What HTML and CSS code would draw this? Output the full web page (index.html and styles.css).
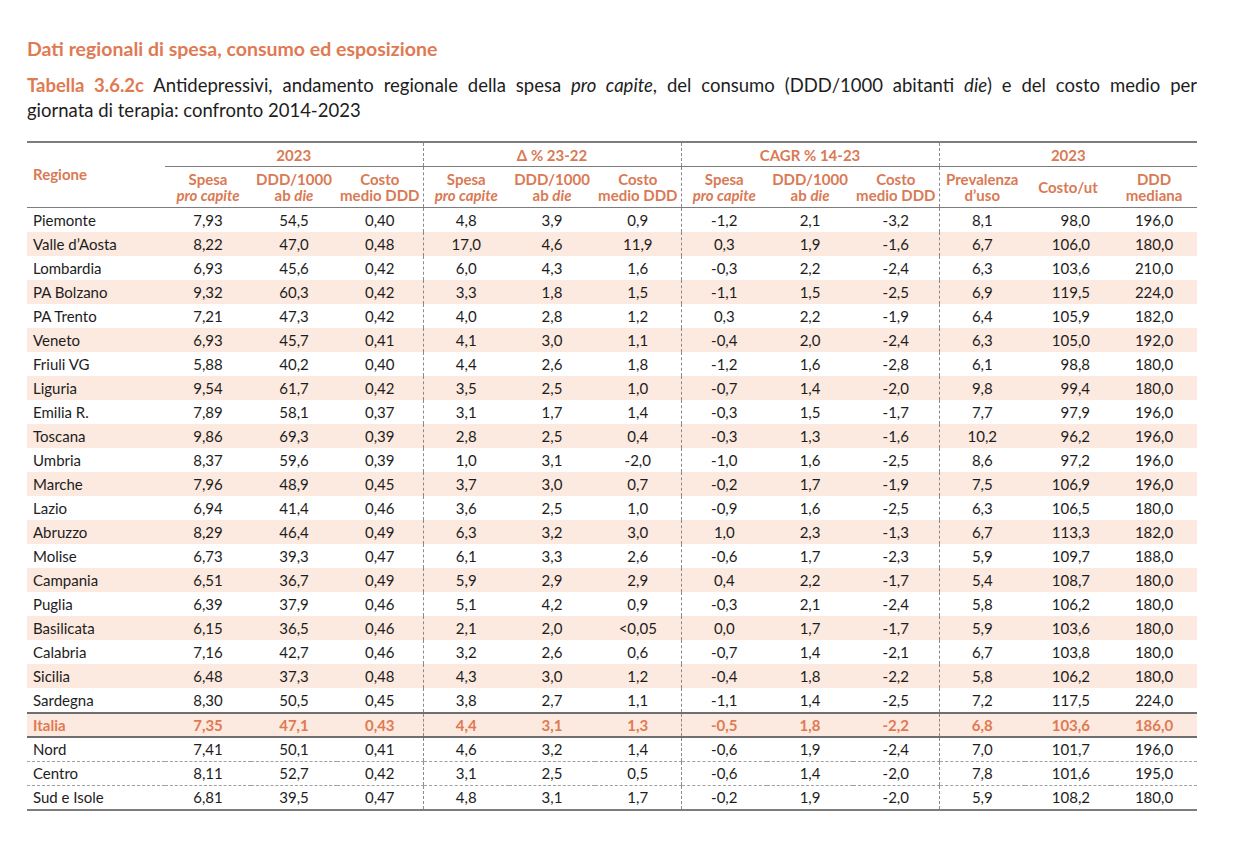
FILE: index.html
```html
<!DOCTYPE html>
<html lang="it">
<head>
<meta charset="utf-8">
<title>Tabella 3.6.2c</title>
<link rel="stylesheet" href="styles.css">
</head>
<body>
<div class="page">
  <h2 class="section-title">Dati regionali di spesa, consumo ed esposizione</h2>
  <p class="caption"><span class="cap-line first"><span class="tab-label">Tabella 3.6.2c</span> Antidepressivi, andamento regionale della spesa <i>pro capite</i>, del consumo (DDD/1000 abitanti <i>die</i>) e del costo medio per</span><span class="cap-line">giornata di terapia: confronto 2014-2023</span></p>
  <table class="data">
    <colgroup>
      <col class="c-reg">
      <col class="c-num"><col class="c-num"><col class="c-num">
      <col class="c-num"><col class="c-num"><col class="c-num">
      <col class="c-num"><col class="c-num"><col class="c-num">
      <col class="c-num"><col class="c-num"><col class="c-num">
    </colgroup>
    <thead>
      <tr class="h1">
        <th class="reg" rowspan="2">Regione</th>
        <th colspan="3" class="grp">2023</th>
        <th colspan="3" class="grp sep">Δ % 23-22</th>
        <th colspan="3" class="grp sep">CAGR % 14-23</th>
        <th colspan="3" class="grp sep">2023</th>
      </tr>
      <tr class="h2">
        <th>Spesa<br><i>pro capite</i></th>
        <th>DDD/1000<br>ab <i>die</i></th>
        <th>Costo<br>medio DDD</th>
        <th class="sep">Spesa<br><i>pro capite</i></th>
        <th>DDD/1000<br>ab <i>die</i></th>
        <th>Costo<br>medio DDD</th>
        <th class="sep">Spesa<br><i>pro capite</i></th>
        <th>DDD/1000<br>ab <i>die</i></th>
        <th>Costo<br>medio DDD</th>
        <th class="sep">Prevalenza<br>d’uso</th>
        <th>Costo/ut</th>
        <th>DDD<br>mediana</th>
      </tr>
    </thead>
    <tbody>
      <tr><td>Piemonte</td><td>7,93</td><td>54,5</td><td>0,40</td><td class="sep">4,8</td><td>3,9</td><td>0,9</td><td class="sep">-1,2</td><td>2,1</td><td>-3,2</td><td class="sep">8,1</td><td class="r">98,0</td><td>196,0</td></tr>
      <tr class="alt"><td>Valle d’Aosta</td><td>8,22</td><td>47,0</td><td>0,48</td><td class="sep">17,0</td><td>4,6</td><td>11,9</td><td class="sep">0,3</td><td>1,9</td><td>-1,6</td><td class="sep">6,7</td><td class="r">106,0</td><td>180,0</td></tr>
      <tr><td>Lombardia</td><td>6,93</td><td>45,6</td><td>0,42</td><td class="sep">6,0</td><td>4,3</td><td>1,6</td><td class="sep">-0,3</td><td>2,2</td><td>-2,4</td><td class="sep">6,3</td><td class="r">103,6</td><td>210,0</td></tr>
      <tr class="alt"><td>PA Bolzano</td><td>9,32</td><td>60,3</td><td>0,42</td><td class="sep">3,3</td><td>1,8</td><td>1,5</td><td class="sep">-1,1</td><td>1,5</td><td>-2,5</td><td class="sep">6,9</td><td class="r">119,5</td><td>224,0</td></tr>
      <tr><td>PA Trento</td><td>7,21</td><td>47,3</td><td>0,42</td><td class="sep">4,0</td><td>2,8</td><td>1,2</td><td class="sep">0,3</td><td>2,2</td><td>-1,9</td><td class="sep">6,4</td><td class="r">105,9</td><td>182,0</td></tr>
      <tr class="alt"><td>Veneto</td><td>6,93</td><td>45,7</td><td>0,41</td><td class="sep">4,1</td><td>3,0</td><td>1,1</td><td class="sep">-0,4</td><td>2,0</td><td>-2,4</td><td class="sep">6,3</td><td class="r">105,0</td><td>192,0</td></tr>
      <tr><td>Friuli VG</td><td>5,88</td><td>40,2</td><td>0,40</td><td class="sep">4,4</td><td>2,6</td><td>1,8</td><td class="sep">-1,2</td><td>1,6</td><td>-2,8</td><td class="sep">6,1</td><td class="r">98,8</td><td>180,0</td></tr>
      <tr class="alt"><td>Liguria</td><td>9,54</td><td>61,7</td><td>0,42</td><td class="sep">3,5</td><td>2,5</td><td>1,0</td><td class="sep">-0,7</td><td>1,4</td><td>-2,0</td><td class="sep">9,8</td><td class="r">99,4</td><td>180,0</td></tr>
      <tr><td>Emilia R.</td><td>7,89</td><td>58,1</td><td>0,37</td><td class="sep">3,1</td><td>1,7</td><td>1,4</td><td class="sep">-0,3</td><td>1,5</td><td>-1,7</td><td class="sep">7,7</td><td class="r">97,9</td><td>196,0</td></tr>
      <tr class="alt"><td>Toscana</td><td>9,86</td><td>69,3</td><td>0,39</td><td class="sep">2,8</td><td>2,5</td><td>0,4</td><td class="sep">-0,3</td><td>1,3</td><td>-1,6</td><td class="sep">10,2</td><td class="r">96,2</td><td>196,0</td></tr>
      <tr><td>Umbria</td><td>8,37</td><td>59,6</td><td>0,39</td><td class="sep">1,0</td><td>3,1</td><td>-2,0</td><td class="sep">-1,0</td><td>1,6</td><td>-2,5</td><td class="sep">8,6</td><td class="r">97,2</td><td>196,0</td></tr>
      <tr class="alt"><td>Marche</td><td>7,96</td><td>48,9</td><td>0,45</td><td class="sep">3,7</td><td>3,0</td><td>0,7</td><td class="sep">-0,2</td><td>1,7</td><td>-1,9</td><td class="sep">7,5</td><td class="r">106,9</td><td>196,0</td></tr>
      <tr><td>Lazio</td><td>6,94</td><td>41,4</td><td>0,46</td><td class="sep">3,6</td><td>2,5</td><td>1,0</td><td class="sep">-0,9</td><td>1,6</td><td>-2,5</td><td class="sep">6,3</td><td class="r">106,5</td><td>180,0</td></tr>
      <tr class="alt"><td>Abruzzo</td><td>8,29</td><td>46,4</td><td>0,49</td><td class="sep">6,3</td><td>3,2</td><td>3,0</td><td class="sep">1,0</td><td>2,3</td><td>-1,3</td><td class="sep">6,7</td><td class="r">113,3</td><td>182,0</td></tr>
      <tr><td>Molise</td><td>6,73</td><td>39,3</td><td>0,47</td><td class="sep">6,1</td><td>3,3</td><td>2,6</td><td class="sep">-0,6</td><td>1,7</td><td>-2,3</td><td class="sep">5,9</td><td class="r">109,7</td><td>188,0</td></tr>
      <tr class="alt"><td>Campania</td><td>6,51</td><td>36,7</td><td>0,49</td><td class="sep">5,9</td><td>2,9</td><td>2,9</td><td class="sep">0,4</td><td>2,2</td><td>-1,7</td><td class="sep">5,4</td><td class="r">108,7</td><td>180,0</td></tr>
      <tr><td>Puglia</td><td>6,39</td><td>37,9</td><td>0,46</td><td class="sep">5,1</td><td>4,2</td><td>0,9</td><td class="sep">-0,3</td><td>2,1</td><td>-2,4</td><td class="sep">5,8</td><td class="r">106,2</td><td>180,0</td></tr>
      <tr class="alt"><td>Basilicata</td><td>6,15</td><td>36,5</td><td>0,46</td><td class="sep">2,1</td><td>2,0</td><td>&lt;0,05</td><td class="sep">0,0</td><td>1,7</td><td>-1,7</td><td class="sep">5,9</td><td class="r">103,6</td><td>180,0</td></tr>
      <tr><td>Calabria</td><td>7,16</td><td>42,7</td><td>0,46</td><td class="sep">3,2</td><td>2,6</td><td>0,6</td><td class="sep">-0,7</td><td>1,4</td><td>-2,1</td><td class="sep">6,7</td><td class="r">103,8</td><td>180,0</td></tr>
      <tr class="alt"><td>Sicilia</td><td>6,48</td><td>37,3</td><td>0,48</td><td class="sep">4,3</td><td>3,0</td><td>1,2</td><td class="sep">-0,4</td><td>1,8</td><td>-2,2</td><td class="sep">5,8</td><td class="r">106,2</td><td>180,0</td></tr>
      <tr><td>Sardegna</td><td>8,30</td><td>50,5</td><td>0,45</td><td class="sep">3,8</td><td>2,7</td><td>1,1</td><td class="sep">-1,1</td><td>1,4</td><td>-2,5</td><td class="sep">7,2</td><td class="r">117,5</td><td>224,0</td></tr>
      <tr class="italia"><td>Italia</td><td>7,35</td><td>47,1</td><td>0,43</td><td class="sep">4,4</td><td>3,1</td><td>1,3</td><td class="sep">-0,5</td><td>1,8</td><td>-2,2</td><td class="sep">6,8</td><td class="r">103,6</td><td>186,0</td></tr>
      <tr class="area"><td>Nord</td><td>7,41</td><td>50,1</td><td>0,41</td><td class="sep">4,6</td><td>3,2</td><td>1,4</td><td class="sep">-0,6</td><td>1,9</td><td>-2,4</td><td class="sep">7,0</td><td class="r">101,7</td><td>196,0</td></tr>
      <tr class="area"><td>Centro</td><td>8,11</td><td>52,7</td><td>0,42</td><td class="sep">3,1</td><td>2,5</td><td>0,5</td><td class="sep">-0,6</td><td>1,4</td><td>-2,0</td><td class="sep">7,8</td><td class="r">101,6</td><td>195,0</td></tr>
      <tr class="area last"><td>Sud e Isole</td><td>6,81</td><td>39,5</td><td>0,47</td><td class="sep">4,8</td><td>3,1</td><td>1,7</td><td class="sep">-0,2</td><td>1,9</td><td>-2,0</td><td class="sep">5,9</td><td class="r">108,2</td><td>180,0</td></tr>
    </tbody>
  </table>
</div>
</body>
</html>
```

FILE: styles.css
```css
html, body {
  margin: 0;
  padding: 0;
  background: #ffffff;
}
body {
  font-family: Lato, "Open Sans", "Liberation Sans", sans-serif;
  color: #1d1d1d;
}
.page {
  width: 1170px;
  padding: 37px 0 0 27px;
}
.section-title {
  margin: 0;
  font-size: 19.5px;
  font-weight: bold;
  color: #e07a52;
  line-height: 24px;
}
.caption {
  margin: 12px 0 0 0;
  font-size: 18.5px;
  line-height: 25px;
}
.cap-line {
  display: block;
  white-space: nowrap;
}
.cap-line.first {
  text-align: justify;
  text-align-last: justify;
}
.tab-label {
  color: #e07a52;
  font-weight: bold;
}
.data {
  margin-top: 18px;
  width: 1170px;
  border-collapse: collapse;
  table-layout: fixed;
  font-size: 15px;
}
.c-reg { width: 138px; }
.c-num { width: 86px; }
.data th {
  color: #d97a55;
  font-weight: bold;
  font-size: 15px;
  line-height: 16px;
  padding: 0;
  text-align: center;
}
.data thead tr.h1 th {
  border-top: 2px solid #7d7d7d;
  height: 23px;
  border-bottom: 1.5px solid #7d7d7d;
}
.data thead tr.h1 th.reg {
  text-align: left;
  padding-left: 6px;
  padding-bottom: 2px;
  border-bottom: 1.5px solid #7d7d7d;
}
.data thead tr.h2 th {
  height: 40px;
  border-bottom: 1.5px solid #7d7d7d;
  vertical-align: middle;
}
.data .sep {
  border-left: 1px dashed #8a8a8a;
}
.data td {
  height: 24px;
  padding: 0;
  text-align: center;
  line-height: 24px;
  white-space: nowrap;
}
.data td:first-child {
  text-align: left;
  padding-left: 6px;
}
.data td.r {
  text-align: right;
  padding-right: 21px;
}
.data tr.alt td {
  background: #fce9df;
}
.data tr.italia td {
  height: 22px;
  line-height: 22px;
  background: #fce9df;
  color: #e07a52;
  font-weight: bold;
  border-top: 2px solid #6f6f6f;
  border-bottom: 2px solid #6f6f6f;
}
.data tr.italia td.sep,
.data tr.area td.sep {
  border-left: 1px dashed #8a8a8a;
}
.data tr.area td {
  height: 23px;
  line-height: 23px;
  border-bottom: 1px dashed #a0a0a0;
}
.data tr.area.last td {
  height: 22px;
  border-bottom: 2px solid #7d7d7d;
}
```
